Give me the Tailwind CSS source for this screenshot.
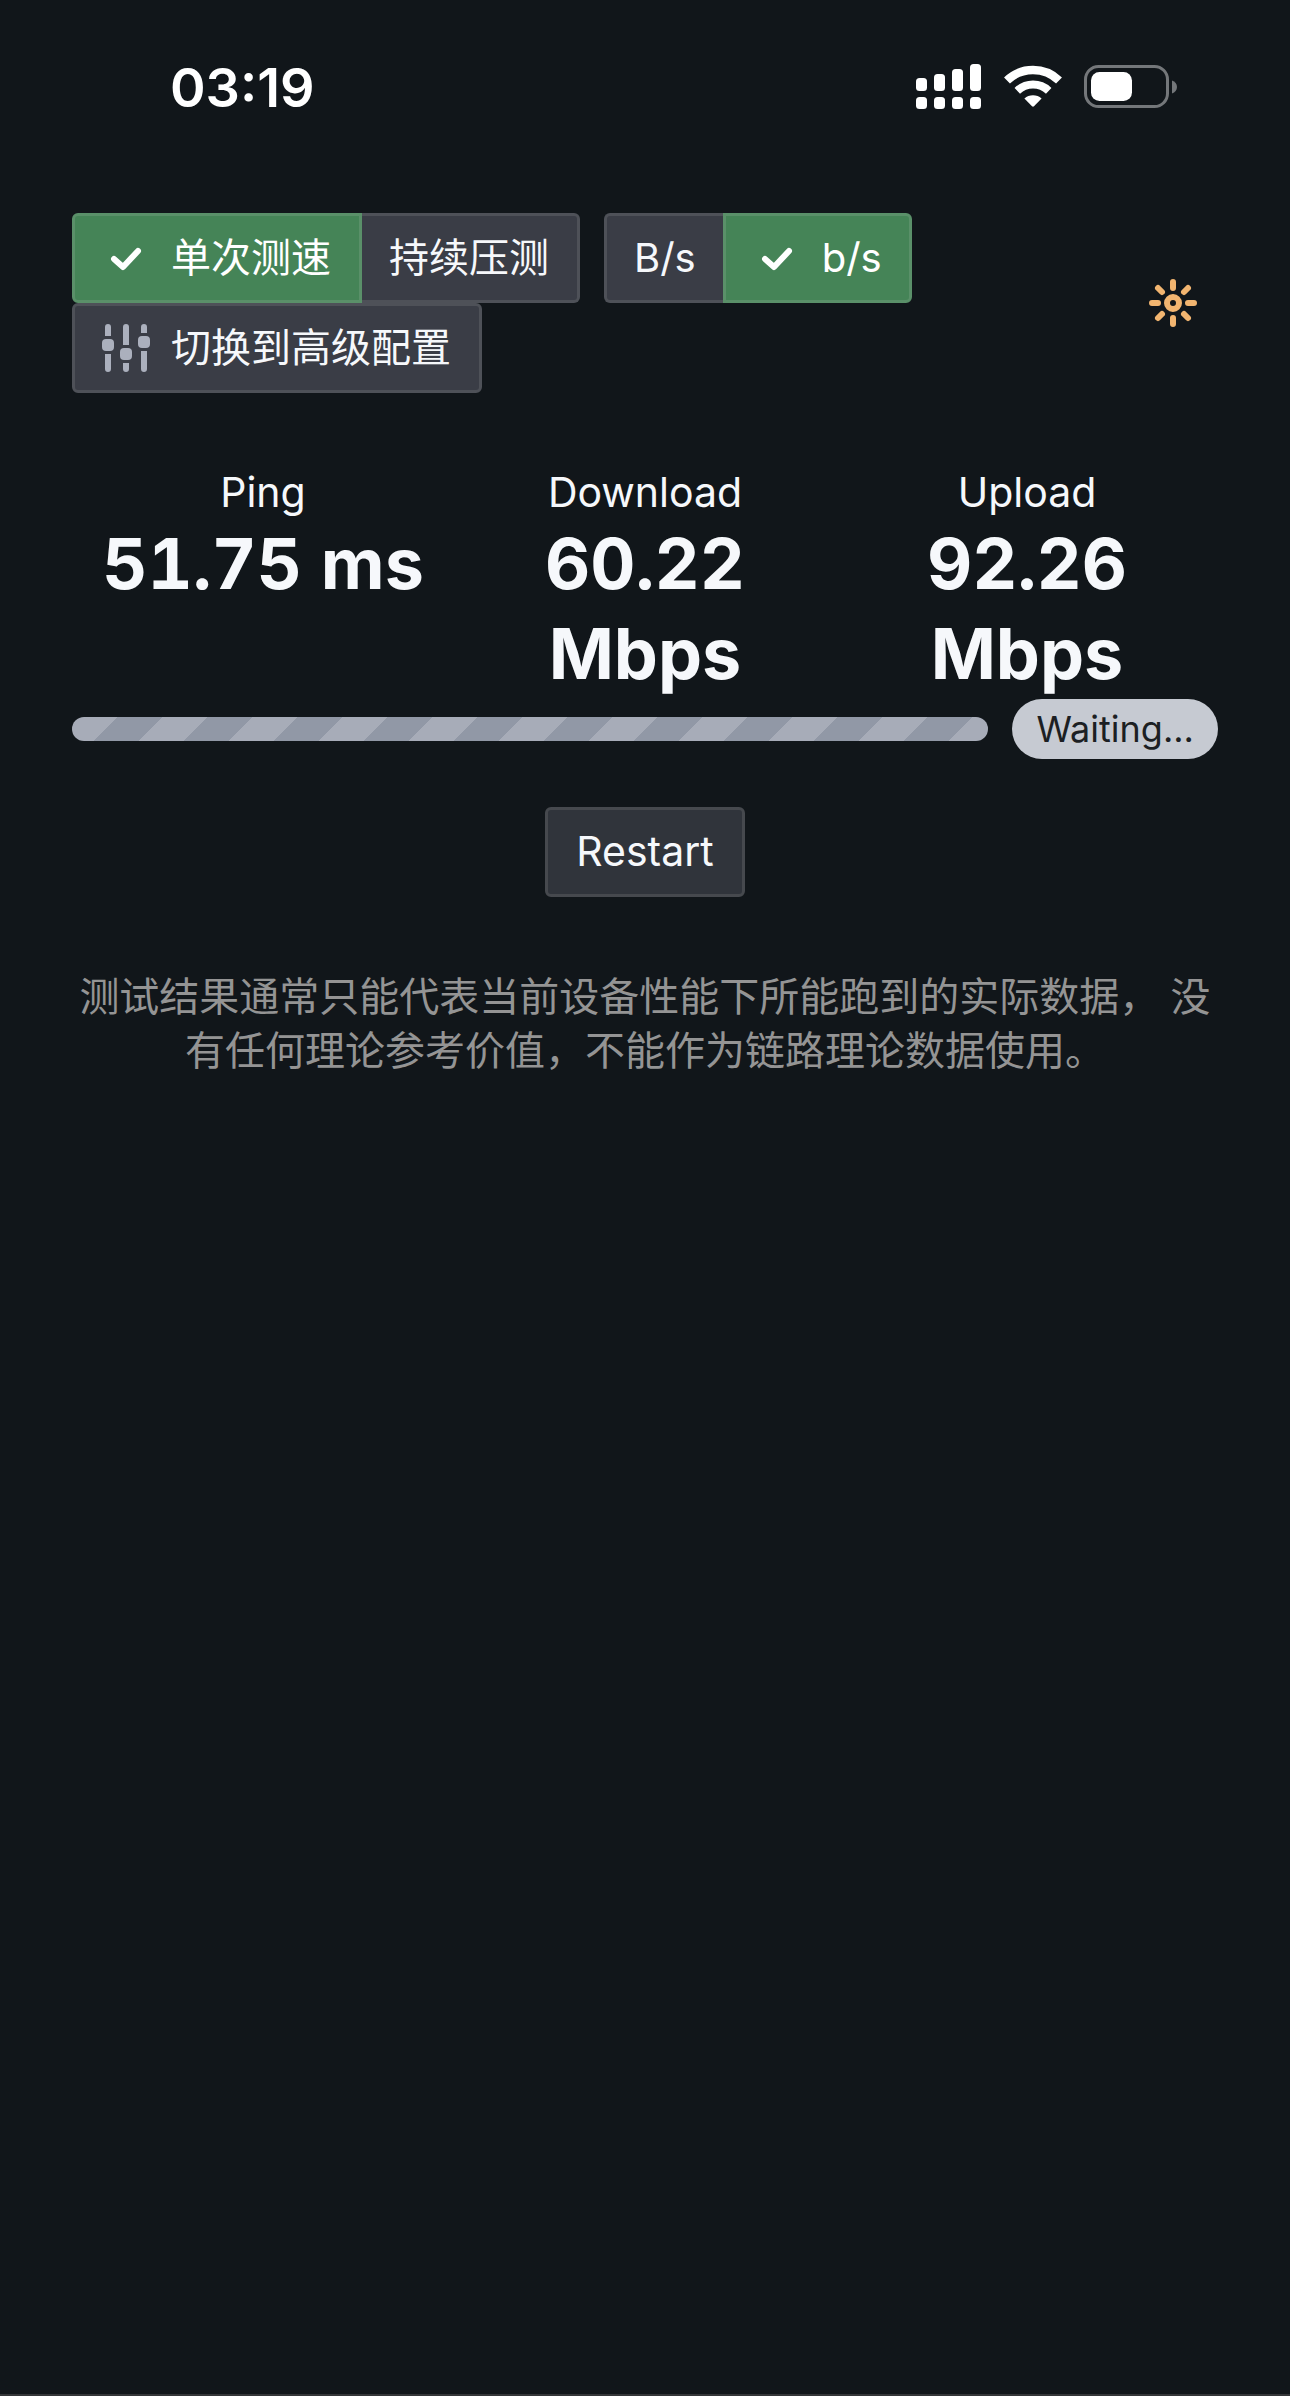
<!DOCTYPE html>
<html lang="zh-CN">

<head>
    <meta charset="UTF-8" />
    <meta name="viewport" content="width=device-width, initial-scale=1.0" />
    <title>Speed Test</title>
    <script src="https://cdn.jsdelivr.net/npm/@tailwindcss/browser@4"></script>
</head>

<body class="flex min-h-screen flex-col bg-[#11161a] font-['Inter','Noto_Sans_CJK_SC',sans-serif] text-[40px] text-[#f6f8fb]">

    <!-- Status bar -->
    <div class="flex h-[177px] items-start justify-between pt-[56px] pr-[112px] pl-[170px] text-white">
        <span class="text-[54px] leading-[64px] font-semibold">03:19</span>
        <div class="flex items-center gap-[22px] pt-2">
            <svg class="h-[46px] w-[66px]" viewBox="0 0 66 46" fill="currentColor" aria-hidden="true">
                <rect x="0" y="14" width="11" height="13" rx="3.5" />
                <rect x="18" y="10" width="11" height="17" rx="3.5" />
                <rect x="36" y="5" width="11" height="22" rx="3.5" />
                <rect x="54" y="0" width="11" height="27" rx="3.5" />
                <rect x="0" y="33" width="11" height="12" rx="3.5" />
                <rect x="18" y="33" width="11" height="12" rx="3.5" />
                <rect x="36" y="33" width="11" height="12" rx="3.5" />
                <rect x="54" y="33" width="11" height="12" rx="3.5" />
            </svg>
            <svg class="h-[46px] w-[58px]" viewBox="0 0 58 46" fill="none" aria-hidden="true">
                <path d="M3 16.5A37.5 37.5 0 0 1 55 16.5" stroke="currentColor" stroke-width="8.5" />
                <path d="M13.3 26.8A23 23 0 0 1 44.7 26.8" stroke="currentColor" stroke-width="8" />
                <path d="M20.4 34.6A13 13 0 0 1 37.6 34.6L30 42.3Q29 43.2 28 42.3Z" fill="currentColor" />
            </svg>
            <svg class="h-[46px] w-[94px]" viewBox="0 0 94 46" fill="none" aria-hidden="true">
                <rect x="1.5" y="2.5" width="82" height="40" rx="13" stroke="#74777a" stroke-width="3" />
                <path d="M88 16.500V29.500C91 28.500 93 26 93 23S91 17.500 88 16.500Z" fill="#74777a" />
                <rect x="7" y="8" width="41" height="29" rx="8.500" fill="currentColor" />
            </svg>
        </div>
    </div>

    <main class="flex-1 px-[72px] pt-9">

        <!-- Toolbar -->
        <div class="flex items-center justify-between">
            <div class="flex flex-1 flex-wrap gap-x-6">
                <div class="flex" role="group" aria-label="测速模式">
                    <button type="button" aria-pressed="true"
                        class="flex h-[90px] items-center gap-[21px] rounded-l-md border-3 border-[#5a9069] bg-[#458457] pr-7 pl-[27px] text-white">
                        <svg class="size-12" viewBox="0 0 48 48" fill="none" stroke="currentColor" stroke-width="6"
                            stroke-linecap="round" stroke-linejoin="round" aria-hidden="true">
                            <path d="M12 25L21 33L36 17" />
                        </svg>
                        单次测速
                    </button>
                    <button type="button" aria-pressed="false"
                        class="h-[90px] rounded-r-md border-3 border-l-0 border-[#4e5158] bg-[#3a3d46] pr-7 pl-[27px]">持续压测</button>
                </div>
                <div class="flex" role="group" aria-label="速率单位">
                    <button type="button" aria-pressed="false"
                        class="h-[90px] rounded-l-md border-3 border-r-0 border-[#4e5158] bg-[#3a3d46] px-[27px]">B/s</button>
                    <button type="button" aria-pressed="true"
                        class="flex h-[90px] items-center gap-[21px] rounded-r-md border-3 border-[#5a9069] bg-[#458457] px-[27px] text-white">
                        <svg class="size-12" viewBox="0 0 48 48" fill="none" stroke="currentColor" stroke-width="6"
                            stroke-linecap="round" stroke-linejoin="round" aria-hidden="true">
                            <path d="M12 25L21 33L36 17" />
                        </svg>
                        b/s
                    </button>
                </div>
                <button type="button"
                    class="flex h-[90px] items-center gap-[21px] rounded-md border-3 border-[#4e5158] bg-[#3a3d46] pr-7 pl-[27px]">
                    <svg class="size-12 text-[#abb0bd]" viewBox="0 0 48 48" fill="currentColor" aria-hidden="true">
                        <path d="M3 12V3a3 3 0 0 1 6 0V12ZM3 30H9V45a3 3 0 0 1-6 0Z" />
                        <path d="M21 21V3a3 3 0 0 1 6 0V21ZM21 39H27V45a3 3 0 0 1-6 0Z" />
                        <path d="M39 9V3a3 3 0 0 1 6 0V9ZM39 27H45V45a3 3 0 0 1-6 0Z" />
                        <rect x="0" y="15" width="12" height="12" rx="4" />
                        <rect x="18" y="24" width="12" height="12" rx="4" />
                        <rect x="36" y="12" width="12" height="12" rx="4" />
                    </svg>
                    切换到高级配置
                </button>
            </div>
            <button type="button" aria-label="切换主题" class="p-[21px] text-[#f2b570]">
                <svg class="size-12" viewBox="0 0 48 48" fill="none" stroke="currentColor" stroke-width="6"
                    stroke-linecap="round" aria-hidden="true">
                    <circle cx="24" cy="24" r="6" />
                    <path d="M24 3V9M24 39V45M3 24H9M39 24H45M9 9L13 13M35 35L39 39M9 39L13 35M35 13L39 9" />
                </svg>
            </button>
        </div>

        <!-- Results -->
        <div class="mt-[72px] grid grid-cols-3 text-center">
            <div>
                <div class="text-[41px] leading-[54px]">Ping</div>
                <div class="text-[70px] leading-[90px] font-bold tabular-nums">51.75 ms</div>
            </div>
            <div>
                <div class="text-[41px] leading-[54px]">Download</div>
                <div class="text-[70px] leading-[90px] font-bold tabular-nums">60.22 Mbps</div>
            </div>
            <div>
                <div class="text-[41px] leading-[54px]">Upload</div>
                <div class="text-[70px] leading-[90px] font-bold tabular-nums">92.26 Mbps</div>
            </div>
        </div>

        <!-- Progress -->
        <div class="flex items-center gap-6">
            <div role="progressbar" aria-label="测速进度"
                class="h-6 flex-1 rounded-full bg-[#a7acb8] bg-[linear-gradient(-45deg,#9198a6_25%,transparent_25%,transparent_50%,#9198a6_50%,#9198a6_75%,transparent_75%)] bg-[length:90px_90px]">
            </div>
            <span class="rounded-full bg-[#c6cad2] px-6 text-[36px] leading-[60px] text-[#1c1f23]">Waiting...</span>
        </div>

        <div class="mt-12 flex justify-center">
            <button type="button"
                class="h-[90px] rounded-md border-3 border-[#46494e] bg-[#30343b] px-7 text-[41px]">Restart</button>
        </div>

        <p class="mt-[73px] text-center leading-[54px] text-[#949494]">
            测试结果通常只能代表当前设备性能下所能跑到的实际数据， 没有任何理论参考价值，不能作为链路理论数据使用。
        </p>
    </main>

    <footer class="border-t-2 border-[#343638]"></footer>
</body>

</html>
